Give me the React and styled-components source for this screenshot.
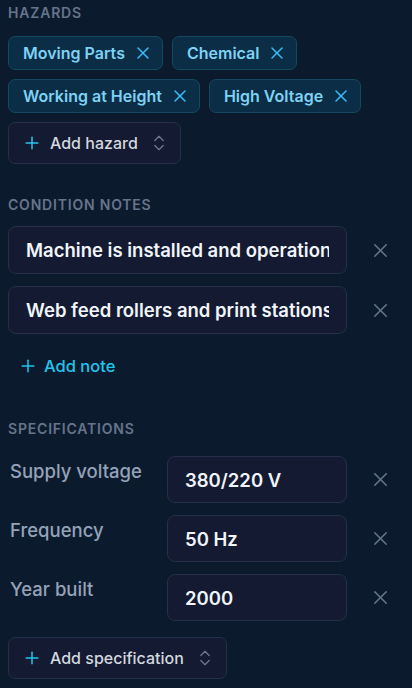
import React from 'react';
import styled, { createGlobalStyle } from 'styled-components';
import { X, Plus, ChevronsUpDown } from 'lucide-react';

const GlobalStyle = createGlobalStyle`
    html, body {
        margin: 0;
        padding: 0;
        background: #0c1a2e;
    }
    body {
        font-family: Inter, "Noto Sans", sans-serif;
    }
    * {
        box-sizing: border-box;
    }
`;

const Page = styled.div`
    min-height: 688px;
    padding: 3px 15px 8px 8px;
    background: #0c1a2e;
    display: flex;
    flex-direction: column;
    gap: 31px;
`;

const Section = styled.section`
    display: flex;
    flex-direction: column;
    margin-top: ${(p) => p.$shift || 0}px;
`;

const Label = styled.h3`
    margin: 0 0 ${(p) => p.$gap || 14}px 0;
    font-size: 14px;
    line-height: 19px;
    font-weight: 600;
    letter-spacing: 0.8px;
    text-transform: uppercase;
    color: #66758b;
`;

const ChipList = styled.div`
    display: flex;
    flex-wrap: wrap;
    gap: 9px;
    padding-right: 30px;
`;

const Chip = styled.span`
    display: inline-flex;
    align-items: center;
    gap: 8px;
    height: 34px;
    padding: 0 9px 0 14px;
    border: 1px solid #124a62;
    border-radius: 7px;
    background: #0b2d45;
    color: #7dd3f5;
    font-size: 16px;
    font-weight: 600;

    svg {
        color: #38bdf8;
    }
`;

const SelectButton = styled.button`
    align-self: ${(p) => (p.$alone ? 'flex-start' : 'auto')};
    margin-top: ${(p) => p.$top || 0}px;
    display: inline-flex;
    align-items: center;
    height: 42px;
    padding: 0 11px 0 13px;
    gap: 8px;
    border: 1px solid #252e4a;
    border-radius: 7px;
    background: #131a31;
    color: #d4d8df;
    font-family: inherit;
    font-size: 16px;
    font-weight: 500;

    .plus {
        color: #22c5ee;
    }
    .chev {
        color: #6b7790;
        margin-left: 3px;
    }
`;

const Rows = styled.div`
    display: flex;
    flex-direction: column;
    gap: 12px;
`;

const Row = styled.div`
    display: flex;
    align-items: ${(p) => (p.$top ? 'flex-start' : 'center')};
`;

const SpecName = styled.div`
    width: 159px;
    flex: none;
    padding: 3px 0 0 2px;
    font-size: 18.5px;
    line-height: 25px;
    font-weight: 500;
    color: #94a3b8;
`;

const Field = styled.input`
    flex: 1;
    min-width: 0;
    height: ${(p) => p.$h || 48}px;
    padding: 0 17px;
    border: 1px solid #252e4a;
    border-radius: 8px;
    background: #131a31;
    color: #f1f5f9;
    font-family: inherit;
    font-size: 18.5px;
    font-weight: 600;
    outline: none;
`;

const RemoveButton = styled.button`
    flex: none;
    align-self: center;
    width: 34px;
    height: 34px;
    margin-left: 16px;
    display: flex;
    align-items: center;
    justify-content: center;
    border: none;
    background: transparent;
    color: #64748b;
    padding: 0;
`;

const LinkButton = styled.button`
    align-self: flex-start;
    display: inline-flex;
    align-items: center;
    gap: 6px;
    height: 40px;
    margin-top: 12px;
    padding: 0 10px;
    border: none;
    background: transparent;
    color: #22c5ee;
    font-family: inherit;
    font-size: 16.5px;
    font-weight: 500;
`;

const HAZARDS = ['Moving Parts', 'Chemical', 'Working at Height', 'High Voltage'];

const NOTES = [
    'Machine is installed and operational in the printing hall',
    'Web feed rollers and print stations are guarded',
];

const SPECS = [
    { name: 'Supply voltage', value: '380/220 V' },
    { name: 'Frequency', value: '50 Hz' },
    { name: 'Year built', value: '2000' },
];

const App = () => {
    return (
        <>
            <GlobalStyle />
            <Page>
                <Section>
                    <Label>Hazards</Label>
                    <ChipList>
                        {HAZARDS.map((h) => (
                            <Chip key={h}>
                                {h}
                                <X size={20} strokeWidth={1.8} />
                            </Chip>
                        ))}
                        <SelectButton>
                            <Plus className="plus" size={20} strokeWidth={1.8} />
                            Add hazard
                            <ChevronsUpDown className="chev" size={20} strokeWidth={1.6} />
                        </SelectButton>
                    </ChipList>
                </Section>

                <Section>
                    <Label $gap={12}>Condition notes</Label>
                    <Rows>
                        {NOTES.map((n) => (
                            <Row key={n}>
                                <Field defaultValue={n} />
                                <RemoveButton>
                                    <X size={23} strokeWidth={1.6} />
                                </RemoveButton>
                            </Row>
                        ))}
                    </Rows>
                    <LinkButton>
                        <Plus size={20} strokeWidth={1.8} />
                        Add note
                    </LinkButton>
                </Section>

                <Section $shift={2}>
                    <Label $gap={18}>Specifications</Label>
                    <Rows>
                        {SPECS.map((s) => (
                            <Row key={s.name} $top>
                                <SpecName>{s.name}</SpecName>
                                <Field $h={47} defaultValue={s.value} />
                                <RemoveButton>
                                    <X size={23} strokeWidth={1.6} />
                                </RemoveButton>
                            </Row>
                        ))}
                    </Rows>
                    <SelectButton $alone $top={16}>
                        <Plus className="plus" size={20} strokeWidth={1.8} />
                        Add specification
                        <ChevronsUpDown className="chev" size={20} strokeWidth={1.6} />
                    </SelectButton>
                </Section>
            </Page>
        </>
    );
};

export default App;
